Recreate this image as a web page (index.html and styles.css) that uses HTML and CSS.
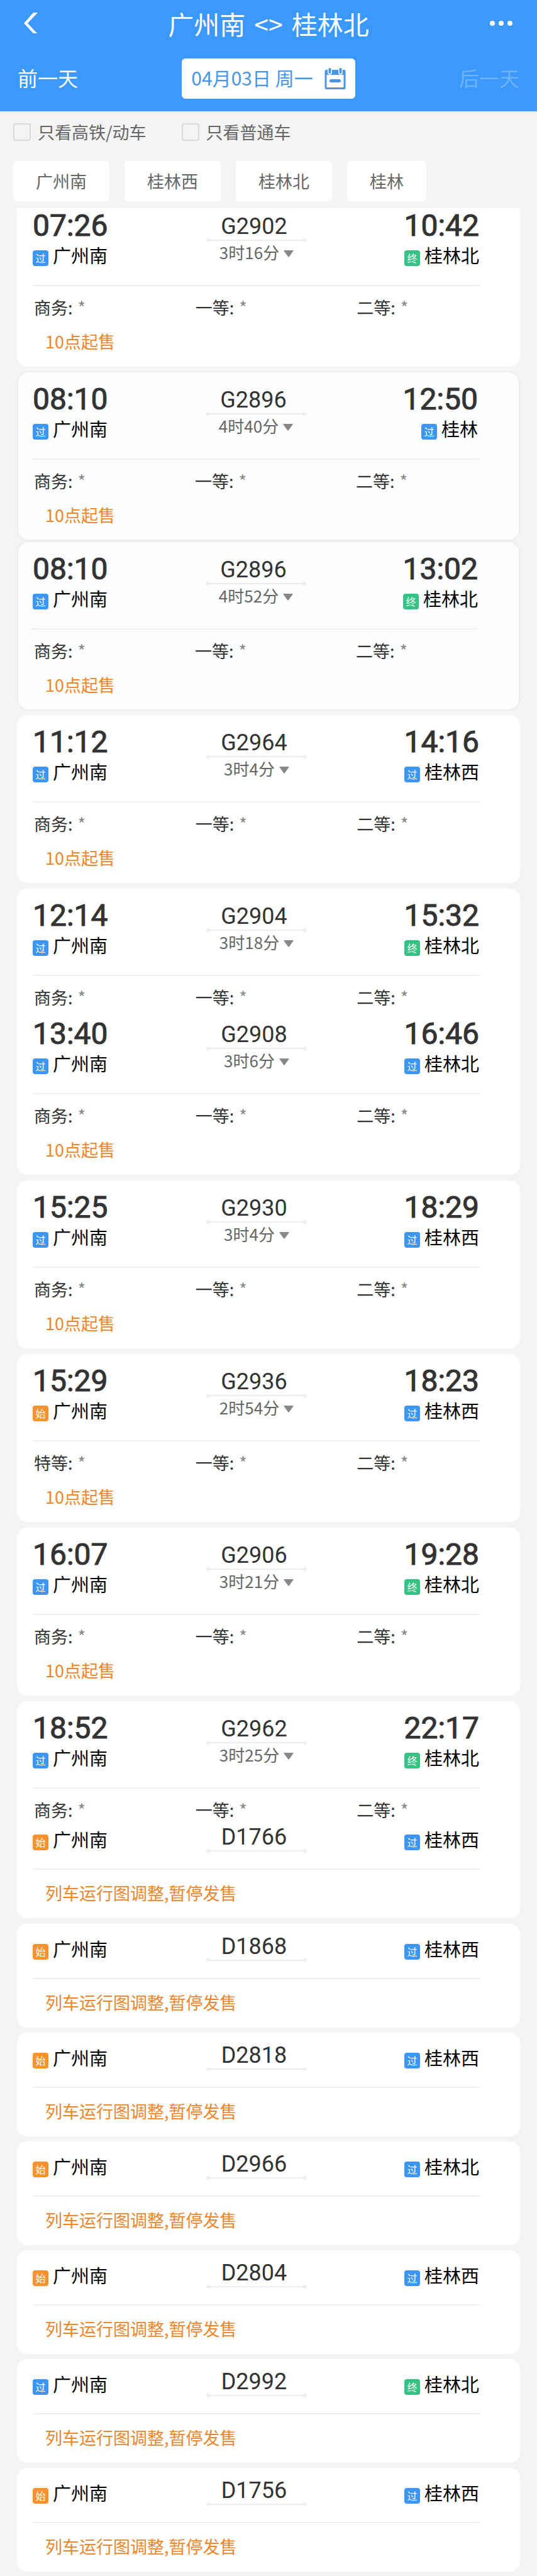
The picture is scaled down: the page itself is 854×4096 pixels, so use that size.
FILE: index.html
```
<!DOCTYPE html>
<html lang="zh-CN">
<head>
<meta charset="utf-8">
<meta name="viewport" content="width=device-width, initial-scale=1">
<title>广州南 - 桂林北</title>
<link rel="stylesheet" href="styles.css">
</head>
<body>
<header class="header">
  <div class="header-bar">
    <button class="icon-button" type="button" aria-label="返回">
      <svg width="22" height="33" viewBox="0 0 22 33"><path d="M15 0h7L6 17l15 16h-6L0 17z" fill="#fff"/></svg>
    </button>
    <h1 class="title"><span>广州南</span><span>&lt;&gt;</span><span>桂林北</span></h1>
    <button class="icon-button" type="button" aria-label="更多">
      <svg width="38" height="10" viewBox="0 0 38 10" fill="#fff"><circle cx="5" cy="5" r="4"/><circle cx="19" cy="5" r="4"/><circle cx="33" cy="5" r="4"/></svg>
    </button>
  </div>
  <div class="date-bar">
    <button class="day-button" type="button">前一天</button>
    <button class="date-button" type="button">
      <span>04月03日 周一</span>
      <svg width="34" height="35" viewBox="0 0 34 35" fill="none" stroke="#4795e8"><rect x="2" y="4.500" width="30" height="28" rx="1" stroke-width="3"/><path d="M2 7h30" stroke-width="8" stroke-linejoin="round"/><path d="M8.500 3v4M25.500 3v4" stroke="#fff" stroke-width="7" stroke-linecap="round"/><path d="M8.500 2v5M25.500 2v5" stroke-width="4" stroke-linecap="round"/><path d="M10.500 20.500h13" stroke-width="5" stroke-linecap="round"/></svg>
    </button>
    <button class="day-button" type="button" disabled>后一天</button>
  </div>
</header>
<section class="filters">
  <div class="checks">
    <label class="check"><input type="checkbox">只看高铁/动车</label>
    <label class="check"><input type="checkbox">只看普通车</label>
  </div>
  <div class="chips">
    <button class="chip" type="button">广州南</button>
    <button class="chip" type="button">桂林西</button>
    <button class="chip" type="button">桂林北</button>
    <button class="chip" type="button">桂林</button>
  </div>
</section>
<main class="list" id="list"></main>
<script src="app.js"></script>
</body>
</html>
```
FILE: styles.css
```
* { box-sizing: border-box; }

body {
  margin: 0;
  background: #f4f4f4;
  color: #333;
  font-family: "Noto Sans CJK SC", sans-serif;
  font-size: 27px;
  line-height: 30px;
}

button {
  border: 0;
  padding: 0;
  background: none;
  color: inherit;
  font: inherit;
}

svg { display: block; }

.header {
  padding: 0 28px 20px;
  background: #3b98fc;
  color: #fff;
}

.header-bar {
  display: flex;
  align-items: center;
  justify-content: space-between;
  height: 73px;
  padding: 0 10px;
}

.icon-button { display: flex; width: 38px; }

.title {
  display: flex;
  gap: 14px;
  margin: 0;
  font-size: 41px;
  font-weight: 400;
  line-height: 56px;
}

.date-bar {
  display: flex;
  align-items: center;
  justify-content: space-between;
  padding-top: 20px;
}

.day-button { padding-bottom: 4px; font-size: 32px; line-height: 36px; }
.day-button:disabled { color: #6db3fd; }

.date-button {
  display: flex;
  align-items: center;
  gap: 18px;
  height: 64px;
  padding: 0 15px;
  border-radius: 6px;
  background: #fff;
  color: #4795e8;
  font-size: 30px;
}
.date-button span { padding-bottom: 4px; }

.filters { padding: 18px 21px 11px; }

.checks { display: flex; gap: 56px; }

.check {
  display: flex;
  align-items: center;
  gap: 11px;
  color: #666;
}

.check input {
  appearance: none;
  width: 28px;
  height: 28px;
  margin: 0;
  border: 2px solid #d9d9d9;
  border-radius: 4px;
}

.chips { display: flex; gap: 24px; margin-top: 31px; }

.chip {
  padding: 17px 36px;
  border-radius: 5px;
  background: #fff;
  color: #666;
}

.list {
  display: flex;
  flex-direction: column;
  gap: 9px;
  padding: 0 27px 6px;
}

.card {
  border-radius: 16px;
  background: #fff;
}

.card-cut { border-radius: 0 0 16px 16px; }
.card-cut .trip { padding-top: 0; }

.card-shaded {
  margin: 0 2px;
  background: #fcfdff;
  box-shadow: 0 0 2px 2px #eee;
}
.card-shaded + .card-shaded { margin-top: -5px; }

.trip { padding: 15px 0 25px 25px; }
.trip-open { padding-bottom: 0; }
.card-shaded .trip { padding-bottom: 24px; padding-left: 23px; }

.head {
  display: grid;
  grid-template-columns: 1fr 160px 1fr;
  margin-right: 63px;
  padding-bottom: 30px;
  border-bottom: 2px solid #f0f0f0;
}

.end { display: flex; flex-direction: column; align-items: flex-start; }
.end-to { align-items: flex-end; padding-right: 2px; }

.time {
  font: 400 48px/56px Roboto, sans-serif;
  -webkit-text-stroke: 1px #333;
}

.station {
  display: flex;
  align-items: flex-end;
  gap: 7px;
  color: #000;
  font-size: 29px;
  line-height: 36px;
}

.badge {
  width: 25px;
  height: 25px;
  border-radius: 4px;
  color: #fff;
  font-size: 16px;
  line-height: 24px;
  text-align: center;
}
.badge-pass { background: #3d95f5; }
.badge-start { background: #f7922d; }
.badge-final { background: #36c284; }

.middle {
  display: flex;
  flex-direction: column;
  align-items: center;
  padding-top: 10px;
}

.code {
  padding-right: 8px;
  font: 400 36px/38px Roboto, sans-serif;
}

.duration {
  display: flex;
  align-items: center;
  gap: 7px;
  color: #666;
  font-size: 26px;
  line-height: 32px;
}
.duration svg { margin-top: 5px; }

.seats {
  display: grid;
  grid-template-columns: repeat(3, 1fr);
  margin: 19px 3px 0 2px;
}

.seat { display: flex; gap: 8px; }
.seat span { color: #888; }

.notice {
  margin: 24px 0 0 20px;
  color: #ee862b;
}

.trip-plain .head { padding-bottom: 25px; }
.trip-plain .middle { padding-top: 2px; }
.trip-plain .station { padding-top: 6px; }
.trip-plain .notice { margin-top: 22px; }
.trip-open + .trip-plain { padding-top: 7px; }

.list-suspended { display: flex; flex-direction: column; gap: 8px; }
```
FILE: app.js
```
const ON_SALE = '10点起售';
const SUSPENDED = '列车运行图调整,暂停发售';
const KINDS = { 过: 'pass', 始: 'start', 终: 'final' };

const trip = (from, code, to, depart, arrive, duration, seat = '商务', notice = ON_SALE) =>
  ({ from, code, to, depart, arrive, duration, seat, notice });
const plain = (from, code, to) => ({ from, code, to, notice: SUSPENDED });

const running = [
  { style: 'card-cut', trips: [trip('过', 'G2902', '终桂林北', '07:26', '10:42', '3时16分')] },
  { style: 'card-shaded', trips: [trip('过', 'G2896', '过桂林', '08:10', '12:50', '4时40分')] },
  { style: 'card-shaded', trips: [trip('过', 'G2896', '终桂林北', '08:10', '13:02', '4时52分')] },
  { trips: [trip('过', 'G2964', '过桂林西', '11:12', '14:16', '3时4分')] },
  { trips: [
    trip('过', 'G2904', '终桂林北', '12:14', '15:32', '3时18分', '商务', ''),
    trip('过', 'G2908', '过桂林北', '13:40', '16:46', '3时6分'),
  ] },
  { trips: [trip('过', 'G2930', '过桂林西', '15:25', '18:29', '3时4分')] },
  { trips: [trip('始', 'G2936', '过桂林西', '15:29', '18:23', '2时54分', '特等')] },
  { trips: [trip('过', 'G2906', '终桂林北', '16:07', '19:28', '3时21分')] },
  { trips: [
    trip('过', 'G2962', '终桂林北', '18:52', '22:17', '3时25分', '商务', ''),
    plain('始', 'D1766', '过桂林西'),
  ] },
];

const suspended = [
  plain('始', 'D1868', '过桂林西'),
  plain('始', 'D2818', '过桂林西'),
  plain('始', 'D2966', '过桂林北'),
  plain('始', 'D2804', '过桂林西'),
  plain('过', 'D2992', '终桂林北'),
  plain('始', 'D1756', '过桂林西'),
].map(t => ({ trips: [t] }));

const station = (kind, name) =>
  `<div class="station"><span class="badge badge-${KINDS[kind]}">${kind}</span>${name}</div>`;
const time = value => (value ? `<div class="time">${value}</div>` : '');
const seat = name => `<div class="seat">${name}:<span>*</span></div>`;

const line = `<svg width="160" height="6" viewBox="0 0 160 6" fill="none" stroke="#d9d9d9"><path d="M5 3h150"/><circle cx="3" cy="3" r="2"/><circle cx="157" cy="3" r="2"/></svg>`;
const arrow = `<svg width="16" height="11" viewBox="0 0 16 11"><path d="M1 0h14q1 0 .5 1L9 10q-1 1-2 0L.5 1Q0 0 1 0z" fill="#888"/></svg>`;

const renderTrip = t => `
  <article class="trip ${t.depart ? '' : 'trip-plain'} ${t.notice ? '' : 'trip-open'}">
    <div class="head">
      <div class="end">${time(t.depart)}${station(t.from, '广州南')}</div>
      <div class="middle"><div class="code">${t.code}</div>${line}
        ${t.duration ? `<div class="duration">${t.duration}${arrow}</div>` : ''}</div>
      <div class="end end-to">${time(t.arrive)}${station(t.to[0], t.to.slice(1))}</div>
    </div>
    ${t.seat ? `<div class="seats">${seat(t.seat)}${seat('一等')}${seat('二等')}</div>` : ''}
    ${t.notice ? `<div class="notice">${t.notice}</div>` : ''}
  </article>`;

const renderCard = c => `<section class="card ${c.style || ''}">${c.trips.map(renderTrip).join('')}</section>`;

document.getElementById('list').innerHTML =
  running.map(renderCard).join('') +
  `<div class="list-suspended">${suspended.map(renderCard).join('')}</div>`;
```
